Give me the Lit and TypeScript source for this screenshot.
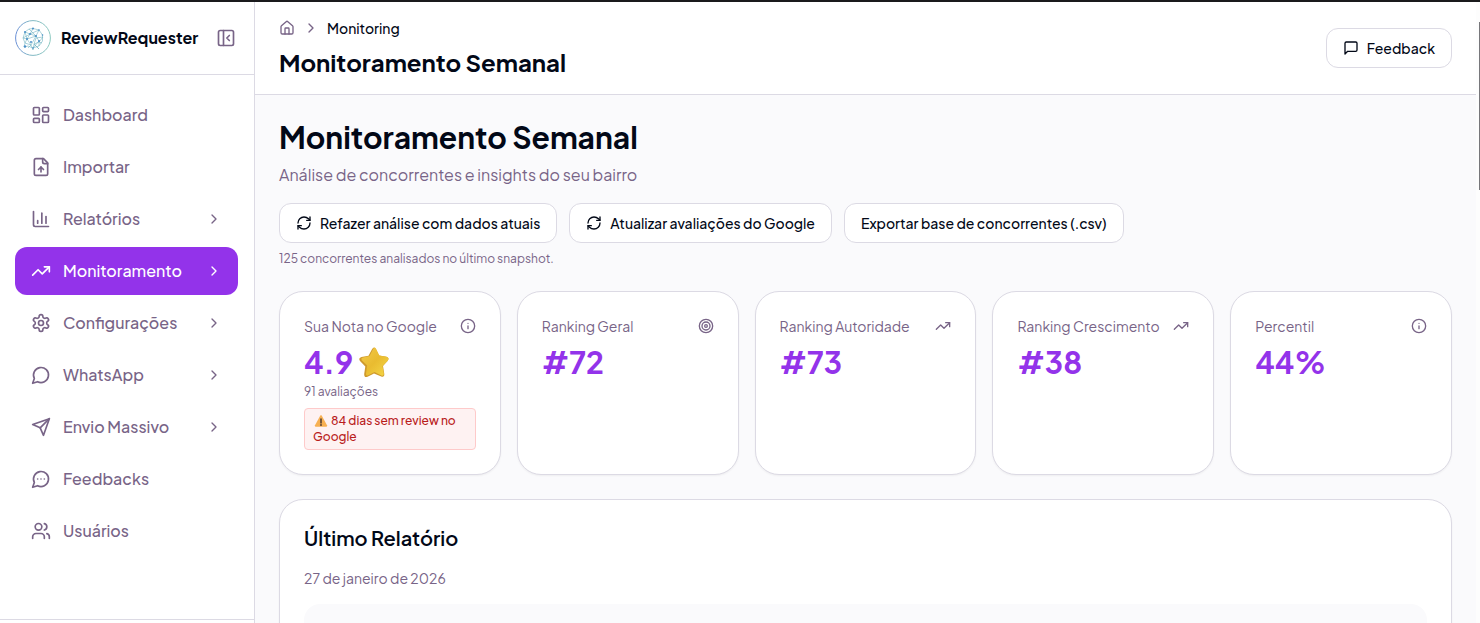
import { LitElement, html, svg, css, nothing } from "lit";
import { customElement, property } from "lit/decorators.js";

const ICONS: Record<string, unknown> = {
  dashboard: svg`<rect width="7" height="9" x="3" y="3" rx="1"/><rect width="7" height="5" x="14" y="3" rx="1"/><rect width="7" height="9" x="14" y="12" rx="1"/><rect width="7" height="5" x="3" y="16" rx="1"/>`,
  fileUp: svg`<path d="M15 2H6a2 2 0 0 0-2 2v16a2 2 0 0 0 2 2h12a2 2 0 0 0 2-2V7Z"/><path d="M14 2v4a2 2 0 0 0 2 2h4"/><path d="M12 12v6"/><path d="m15 15-3-3-3 3"/>`,
  chart: svg`<path d="M3 3v16a2 2 0 0 0 2 2h16"/><path d="M18 17V9"/><path d="M13 17V5"/><path d="M8 17v-3"/>`,
  trending: svg`<path d="M22 7 13.5 15.5 8.5 10.5 2 17"/><path d="M16 7h6v6"/>`,
  settings: svg`<path d="M12.22 2h-.44a2 2 0 0 0-2 2v.18a2 2 0 0 1-1 1.73l-.43.25a2 2 0 0 1-2 0l-.15-.08a2 2 0 0 0-2.73.73l-.22.38a2 2 0 0 0 .73 2.73l.15.1a2 2 0 0 1 1 1.72v.51a2 2 0 0 1-1 1.74l-.15.09a2 2 0 0 0-.73 2.73l.22.38a2 2 0 0 0 2.73.73l.15-.08a2 2 0 0 1 2 0l.43.25a2 2 0 0 1 1 1.73V20a2 2 0 0 0 2 2h.44a2 2 0 0 0 2-2v-.18a2 2 0 0 1 1-1.73l.43-.25a2 2 0 0 1 2 0l.15.08a2 2 0 0 0 2.73-.73l.22-.39a2 2 0 0 0-.73-2.73l-.15-.08a2 2 0 0 1-1-1.74v-.5a2 2 0 0 1 1-1.74l.15-.09a2 2 0 0 0 .73-2.73l-.22-.38a2 2 0 0 0-2.73-.73l-.15.08a2 2 0 0 1-2 0l-.43-.25a2 2 0 0 1-1-1.73V4a2 2 0 0 0-2-2z"/><circle cx="12" cy="12" r="3"/>`,
  bubble: svg`<path d="M7.9 20A9 9 0 1 0 4 16.1L2 22Z"/>`,
  bubbleDots: svg`<path d="M7.9 20A9 9 0 1 0 4 16.1L2 22Z"/><path d="M8 12h.01"/><path d="M12 12h.01"/><path d="M16 12h.01"/>`,
  send: svg`<path d="m22 2-7 20-4-9-9-4Z"/><path d="M22 2 11 13"/>`,
  users: svg`<path d="M16 21v-2a4 4 0 0 0-4-4H6a4 4 0 0 0-4 4v2"/><circle cx="9" cy="7" r="4"/><path d="M22 21v-2a4 4 0 0 0-3-3.87"/><path d="M16 3.13a4 4 0 0 1 0 7.75"/>`,
  chevron: svg`<path d="m9 18 6-6-6-6"/>`,
  panel: svg`<rect width="18" height="18" x="3" y="3" rx="2"/><path d="M9 3v18"/><path d="m16 15-3-3 3-3"/>`,
  home: svg`<path d="M15 21v-8a1 1 0 0 0-1-1h-4a1 1 0 0 0-1 1v8"/><path d="M3 10a2 2 0 0 1 .709-1.528l7-5.999a2 2 0 0 1 2.582 0l7 5.999A2 2 0 0 1 21 10v9a2 2 0 0 1-2 2H5a2 2 0 0 1-2-2z"/>`,
  message: svg`<path d="M21 15a2 2 0 0 1-2 2H7l-4 4V5a2 2 0 0 1 2-2h14a2 2 0 0 1 2 2z"/>`,
  refresh: svg`<path d="M3 12a9 9 0 0 1 9-9 9.75 9.75 0 0 1 6.74 2.74L21 8"/><path d="M21 3v5h-5"/><path d="M21 12a9 9 0 0 1-9 9 9.75 9.75 0 0 1-6.74-2.74L3 16"/><path d="M8 16H3v5"/>`,
  info: svg`<circle cx="12" cy="12" r="10"/><path d="M12 16v-4"/><path d="M12 8h.01"/>`,
  target: svg`<circle cx="12" cy="12" r="10"/><circle cx="12" cy="12" r="6"/><circle cx="12" cy="12" r="2"/>`,
};

@customElement("ui-icon")
class UiIcon extends LitElement {
  @property() name = "";
  static styles = css`
    :host { display: inline-flex; flex: none; width: 16px; height: 16px; }
    svg { width: 100%; height: 100%; fill: none; stroke: currentColor; stroke-width: 2; stroke-linecap: round; stroke-linejoin: round; }
  `;
  render() {
    return html`<svg viewBox="0 0 24 24" aria-hidden="true">${ICONS[this.name]}</svg>`;
  }
}

const NAV = [
  { label: "Dashboard", icon: "dashboard" },
  { label: "Importar", icon: "fileUp" },
  { label: "Relatórios", icon: "chart", more: true },
  { label: "Monitoramento", icon: "trending", more: true, active: true },
  { label: "Configurações", icon: "settings", more: true },
  { label: "WhatsApp", icon: "bubble", more: true },
  { label: "Envio Massivo", icon: "send", more: true },
  { label: "Feedbacks", icon: "bubbleDots" },
  { label: "Usuários", icon: "users" },
];

const STATS = [
  { label: "Sua Nota no Google", icon: "info", value: "4.9", rating: true },
  { label: "Ranking Geral", icon: "target", value: "#72" },
  { label: "Ranking Autoridade", icon: "trending", value: "#73" },
  { label: "Ranking Crescimento", icon: "trending", value: "#38" },
  { label: "Percentil", icon: "info", value: "44%" },
];

const logo = html`<svg class="logo" viewBox="0 0 36 36" aria-hidden="true">
  <defs><linearGradient id="ring" x1="0" x2="1"><stop offset="0" stop-color="#6a8fd6"/><stop offset=".4" stop-color="#7fb5c4"/><stop offset="1" stop-color="#8cc9c0"/></linearGradient></defs>
  <circle cx="18" cy="18" r="17.4" fill="#fff" stroke="url(#ring)" stroke-width="1"/>
  <g fill="none" stroke="#74b6c2" stroke-width=".6">
    <path d="M18 8.500 24 10l3.500 5v6L24 26l-6 2-5-2-4 1 1-4-2-5 2-6 4-3z"/>
    <path d="M18 8.500 15 14l-5-2 2 7-4-1 7-4 6 2 3-6-9 4-3 5 4 6-3 3m3-3 2 5 1-6 5 5-5-5 2-6 7-1-4 5-5 2m5-2 3 1M21 16l3 5v5M12 19l9-3-5 9-6-2 2-4M14 9l7 7M18 28l6-7"/>
  </g>
  <g fill="#4a8fc8"><circle cx="18" cy="8.500" r="1"/><circle cx="10" cy="12" r="1"/><circle cx="15" cy="14" r="1"/><circle cx="24" cy="10" r=".8"/><circle cx="12" cy="19" r="1"/><circle cx="21" cy="16" r="1"/><circle cx="16" cy="22" r="1"/><circle cx="24" cy="21" r="1"/><circle cx="10" cy="26.500" r="1.200"/><circle cx="27.500" cy="15" r=".8"/><circle cx="18" cy="28" r=".8"/></g>
</svg>`;

const star = html`<svg class="star" viewBox="0 0 32 32" role="img" aria-label="estrela">
  <defs><linearGradient id="gold" x1="0" y1="0" x2="1" y2="1"><stop offset="0" stop-color="#f2c94a"/><stop offset=".5" stop-color="#e9bb30"/><stop offset="1" stop-color="#f5d848"/></linearGradient></defs>
  <path d="M14 3.200Q16 0 18 3.200L21 9.500l7.500 1.300Q32 12 29.500 15L25 20l1.300 8q.2 3.500-3 2.600L16 27.500l-6.500 3.300Q6 32 6.200 28L7.300 20.500 2 15Q0 12 3.500 11L10.500 9.800Z" fill="#cf9a2c"/>
  <path d="M15 3.200Q16.700 0 18.300 3.200L21.300 9.500l7.200 1.300Q32 12 29.500 15L24.500 20l1.300 7.500q.2 3-2.500 2L16.500 26l-6.300 3.200Q7.500 30 8 27.200L9.200 19.500 4 14.400Q2.500 12 5 11.400L11.500 10Z" fill="url(#gold)"/>
</svg>`;

const warning = html`<svg class="warn" viewBox="0 0 14 14" role="img" aria-label="Atenção">
  <path d="M6.200 1.700Q7 .5 7.800 1.700L13 11.300Q13.500 12.800 12 12.800H2Q.5 12.800 1 11.300Z" fill="#f7b052"/>
  <path d="M7 5v4" stroke="#4b3a32" stroke-width="1.500" stroke-linecap="round"/><circle cx="7" cy="11" r=".9" fill="#4b3a32"/>
</svg>`;

@customElement("app-root")
class AppRoot extends LitElement {
  static styles = css`
    :host { display: block; height: 100vh; overflow: hidden; box-sizing: border-box; border-top: 2px solid #1a1a1c; background: #fafafc; color: #020817; font-family: "Plus Jakarta Sans", Inter, "Open Sans", sans-serif; font-size: 14px; line-height: 20px; }
    * { box-sizing: border-box; }
    h1, h2, h3, p, ul { margin: 0; padding: 0; }
    a { color: inherit; text-decoration: none; }
    button { font: inherit; color: inherit; cursor: pointer; }
    .shell { display: flex; height: 100%; }

    .sidebar { display: flex; flex-direction: column; flex: none; width: 255px; background: #fff; border-right: 1px solid #dcdae4; color: #786487; }
    .brand { display: flex; align-items: center; gap: 10px; height: 73px; padding: 0 18px 0 15px; border-bottom: 1px solid #dcdae4; }
    .logo { width: 36px; height: 36px; flex: none; }
    .name { flex: 1; font-size: 16px; line-height: 24px; font-weight: 700; color: #020817; white-space: nowrap; }
    .toggle { display: flex; padding: 0; border: 0; background: none; }
    .toggle ui-icon { width: 20px; height: 20px; }
    .nav { flex: 1; display: flex; flex-direction: column; gap: 4px; padding: 16px 16px 0 15px; list-style: none; }
    .link { display: flex; align-items: center; gap: 12px; height: 48px; padding: 0 16px; border-radius: 12px; font-size: 16px; line-height: 24px; font-weight: 500; }
    .link ui-icon { width: 20px; height: 20px; }
    .link .more { width: 16px; height: 16px; }
    .text { flex: 1; }
    .active { background: #9333ea; color: #fff; }
    .foot { height: 4px; border-top: 1px solid #dcdae4; }

    .page { flex: 1; min-width: 0; display: flex; flex-direction: column; }
    .top { display: flex; flex: none; justify-content: space-between; align-items: center; height: 93px; padding: 0 24px; background: #fff; border-bottom: 1px solid #dcdae4; }
    .crumbs { display: flex; align-items: center; gap: 8px; color: #786487; }
    .crumbs a { display: flex; }
    .crumbs span { color: #020817; font-weight: 500; }
    .title { margin-top: 8px; font-size: 24px; line-height: 32px; font-weight: 700; }
    .btn { display: inline-flex; align-items: center; gap: 8px; height: 40px; padding: 0 16px; border: 1px solid #dcdae4; border-radius: 12px; background: #fff; font-weight: 500; white-space: nowrap; }

    .content { flex: 1; min-height: 0; overflow: hidden; padding: 24px 24px 0; }
    .heading { font-size: 30px; line-height: 36px; font-weight: 700; }
    .lead { margin-top: 8px; font-size: 16px; line-height: 24px; color: #786487; }
    .actions { display: flex; gap: 12px; margin-top: 16px; }
    .small { font-size: 12px; line-height: 16px; color: #786487; }
    .note { margin-top: 8px; }
    .cards { display: grid; grid-template-columns: repeat(5, minmax(0, 1fr)); gap: 16px; margin-top: 24px; }
    .card { padding: 24px; background: #fff; border: 1px solid #dcdae4; border-radius: 24px; box-shadow: 0 1px 2px rgb(0 0 0 / 5%); }
    .label { display: flex; justify-content: space-between; align-items: center; color: #786487; white-space: nowrap; }
    .value { display: flex; align-items: center; gap: 5px; margin-top: 8px; font-size: 30px; line-height: 36px; font-weight: 700; color: #9333ea; }
    .star { width: 32px; height: 32px; }
    .reviews { margin-top: 4px; }
    .alert { margin-top: 8px; padding: 4px 8px; border: 1px solid #fecaca; border-radius: 4px; background: #fef2f2; color: #b91c1c; font-size: 12px; line-height: 16px; font-weight: 500; }
    .warn { width: 14px; height: 14px; margin: 0 1px; vertical-align: -3px; }
    .report { margin-top: 24px; height: 400px; }
    .subtitle { font-size: 20px; line-height: 28px; font-weight: 600; }
    .date { margin-top: 16px; color: #786487; }
    .panel { margin-top: 16px; height: 200px; border-radius: 16px; background: #fafafc; }

    .scroll { flex: none; width: 4px; padding-top: 20px; background: #fdfdfd; }
    .thumb { width: 1px; height: 168px; margin-left: auto; background: #77777b; }
  `;

  render() {
    return html`<div class="shell">
      <aside class="sidebar">
        <div class="brand">${logo}<span class="name">ReviewRequester</span>
          <button class="toggle" aria-label="Recolher menu"><ui-icon name="panel"></ui-icon></button>
        </div>
        <ul class="nav">
          ${NAV.map((n) => html`<li><a class="link ${n.active ? "active" : ""}" href="#">
            <ui-icon name=${n.icon}></ui-icon><span class="text">${n.label}</span>
            ${n.more ? html`<ui-icon class="more" name="chevron"></ui-icon>` : nothing}</a></li>`)}
        </ul>
        <div class="foot"></div>
      </aside>
      <main class="page">
        <header class="top">
          <div>
            <nav class="crumbs"><a href="#" aria-label="Início"><ui-icon name="home"></ui-icon></a><ui-icon name="chevron"></ui-icon><span>Monitoring</span></nav>
            <h2 class="title">Monitoramento Semanal</h2>
          </div>
          <button class="btn"><ui-icon name="message"></ui-icon>Feedback</button>
        </header>
        <div class="content">
          <h1 class="heading">Monitoramento Semanal</h1>
          <p class="lead">Análise de concorrentes e insights do seu bairro</p>
          <div class="actions">
            <button class="btn"><ui-icon name="refresh"></ui-icon>Refazer análise com dados atuais</button>
            <button class="btn"><ui-icon name="refresh"></ui-icon>Atualizar avaliações do Google</button>
            <button class="btn">Exportar base de concorrentes (.csv)</button>
          </div>
          <p class="small note">125 concorrentes analisados no último snapshot.</p>
          <section class="cards">
            ${STATS.map((s) => html`<article class="card">
              <div class="label"><span>${s.label}</span><ui-icon name=${s.icon}></ui-icon></div>
              <div class="value">${s.value}${s.rating ? star : nothing}</div>
              ${s.rating ? html`<p class="small reviews">91 avaliações</p><p class="alert">${warning} 84 dias sem review no Google</p>` : nothing}
            </article>`)}
          </section>
          <section class="card report">
            <h3 class="subtitle">Último Relatório</h3>
            <p class="date">27 de janeiro de 2026</p>
            <div class="panel"></div>
          </section>
        </div>
      </main>
      <div class="scroll"><div class="thumb"></div></div>
    </div>`;
  }
}
